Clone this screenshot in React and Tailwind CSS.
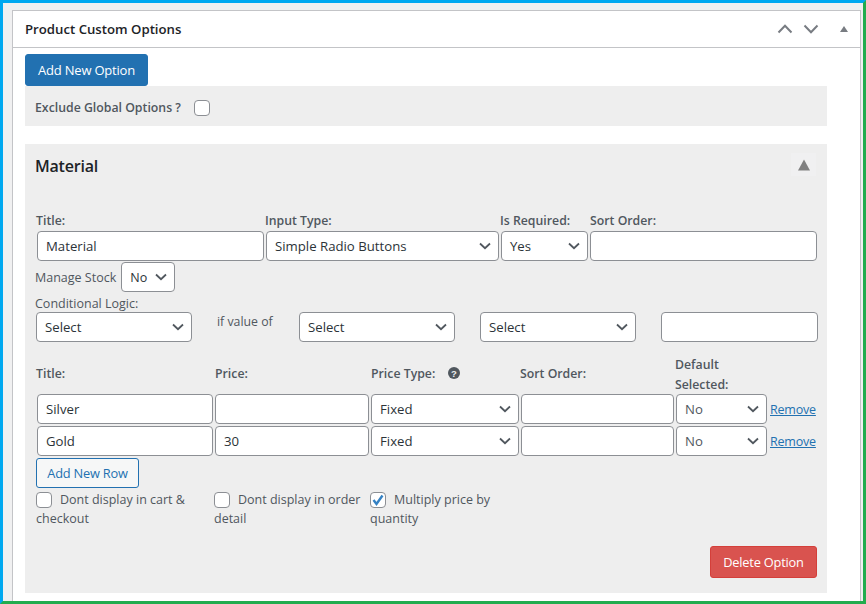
import React from "react";

const Chevron = () => (
  <svg className="absolute right-[5px] top-1/2 -translate-y-1/2 pointer-events-none" width="16" height="16" viewBox="0 0 16 16" fill="none">
    <path d="M3 5.5 L8 10.2 L13 5.5" stroke="#50575e" strokeWidth="1.8" />
  </svg>
);

const Select = ({ w, value, pl = "pl-[8px]", color = "text-[#2c3338]" }) => (
  <div className={`relative h-[30px] shrink-0 bg-white border border-[#8c8f94] rounded-[4px] flex items-center ${w} ${pl} ${color}`}>
    <span>{value}</span>
    <Chevron />
  </div>
);

const Input = ({ w, value = "", color = "text-[#2c3338]" }) => (
  <input readOnly value={value} className={`h-[30px] shrink-0 bg-white border border-[#8c8f94] rounded-[4px] px-[8px] outline-none ${w} ${color}`} />
);

const Check = ({ checked }) => (
  <span className="inline-flex align-middle items-center justify-center w-[16px] h-[16px] bg-white border border-[#8c8f94] rounded-[4px] mr-[8px] -mt-[2px]">
    {checked && (
      <svg width="14" height="14" viewBox="0 0 14 14" fill="none">
        <path d="M2.5 7 L5.5 11 L11.5 2.5" stroke="#3582c4" strokeWidth="2.4" />
      </svg>
    )}
  </span>
);

function OptionRow({ title, price }) {
  return (
    <div className="flex gap-[2px] items-center">
      <Input w="w-[176px]" value={title} />
      <Input w="w-[154px]" value={price} />
      <Select w="w-[148px]" value="Fixed" />
      <Input w="w-[153px]" />
      <Select w="w-[91px]" value="No" color="text-[#50575e]" />
      <a className="ml-[1px] text-[#2271b1] underline text-[12.5px] tracking-[-0.2px]">Remove</a>
    </div>
  );
}

export default function App() {
  return (
    <div className="w-[866px] h-[604px] overflow-hidden bg-[#f0f0f1] border-t-[3px] border-l-[3px] border-r-[3px] border-b-[3px] border-t-[#00a8f0] border-l-[#00a8f0] border-r-[#22ac4e] border-b-[#22ac4e] pt-[7px] pl-[9px] pr-[2px] text-[13.2px] text-[#3c434a] leading-[19px] font-['Open_Sans','Noto_Sans',sans-serif]">
      <div className="h-[600px] bg-white border border-[#c3c4c7] border-b-0">
        <div className="h-[37px] border-b border-[#c3c4c7] flex items-center pl-[12px] pr-[10px]">
          <h2 className="text-[13.2px] font-semibold text-[#1d2327] flex-1">Product Custom Options</h2>
          <svg width="16" height="16" viewBox="0 0 16 16" fill="none" className="mr-[10px]">
            <path d="M1.5 11.5 L8 4.8 L14.5 11.5" stroke="#787c82" strokeWidth="2" />
          </svg>
          <svg width="16" height="16" viewBox="0 0 16 16" fill="none" className="mr-[20px]">
            <path d="M1.5 4.5 L8 11.2 L14.5 4.5" stroke="#787c82" strokeWidth="2" />
          </svg>
          <svg width="10" height="8" viewBox="0 0 10 8" className="mr-[1px]">
            <path d="M5 1 L9 7 L1 7 Z" fill="#787c82" />
          </svg>
        </div>

        <div className="pl-[12px] pr-[33px] pt-[6px]">
          <button className="block w-[123px] h-[32px] bg-[#2271b1] border border-[#2271b1] rounded-[3px] text-white text-[13px] tracking-[-0.2px]">Add New Option</button>

          <div className="h-[40px] bg-[#eeeeee] flex items-center pl-[10px]">
            <span className="mt-[2px] font-semibold text-[12.3px] text-[#50575e]">Exclude Global Options ?</span>
            <span className="ml-[13px] mt-[4px] w-[16px] h-[16px] bg-white border border-[#8c8f94] rounded-[4px]" />
          </div>

          <div className="mt-[18px] h-[449px] bg-[#eeeeee] pl-[11px] pr-[9px] flex flex-col">
            <div className="h-[66px] flex items-start justify-between shrink-0">
              <h3 className="mt-[11px] ml-[-1px] text-[16px] leading-[22px] font-semibold tracking-[-0.2px] text-[#1d2327]">Material</h3>
              <div className="mt-[9px] w-[25px] h-[23px] bg-[#f0f0f1] flex items-center justify-center mr-[2px]">
                <svg width="14" height="12" viewBox="0 0 14 12">
                  <path d="M7 0.5 L13 11.5 L1 11.5 Z" fill="#808080" />
                </svg>
              </div>
            </div>

            <div className="flex text-[12.3px] font-semibold text-[#50575e] h-[21px] pt-[1px] items-start">
              <span className="w-[229px]">Title:</span>
              <span className="w-[235px]">Input Type:</span>
              <span className="w-[89px]">Is Required:</span>
              <span className="pl-[1px]">Sort Order:</span>
            </div>
            <div className="flex gap-[2px] pl-[1px]">
              <Input w="w-[227px]" value="Material" />
              <Select w="w-[233px]" value="Simple Radio Buttons" />
              <Select w="w-[87px]" value="Yes" />
              <Input w="w-[227px]" />
            </div>

            <div className="flex items-center gap-[5px] mt-[1px] ml-[-1px] text-[12.5px] text-[#50575e]">
              <span>Manage Stock</span>
              <Select w="w-[54px]" value="No" />
            </div>

            <div className="h-[20px] ml-[-1px] leading-[24px] text-[12.5px] text-[#50575e]">Conditional Logic:</div>
            <div className="flex items-start">
              <Select w="w-[156px]" value="Select" />
              <span className="w-[107px] shrink-0 pl-[25px] text-[12.3px] text-[#50575e]">if value of</span>
              <Select w="w-[156px]" value="Select" />
              <span className="w-[25px] shrink-0" />
              <Select w="w-[156px]" value="Select" />
              <span className="w-[25px] shrink-0" />
              <Input w="w-[157px]" />
            </div>

            <div className="flex h-[52px] pt-[10px] text-[12.3px] font-semibold text-[#50575e] items-center">
              <span className="w-[179px]">Title:</span>
              <span className="w-[156px]">Price:</span>
              <span className="w-[149px] flex items-center">
                Price Type:
                <svg width="12" height="12" viewBox="0 0 12 12" className="ml-[13px]">
                  <circle cx="6" cy="6" r="6" fill="#50575e" />
                  <text x="6" y="9.5" textAnchor="middle" fontSize="9.5" fontWeight="700" fill="#eeeeee" fontFamily="Liberation Sans">?</text>
                </svg>
              </span>
              <span className="w-[155px]">Sort Order:</span>
              <span className="w-[70px] leading-[20px] mt-[4px]">Default Selected:</span>
            </div>

            <div className="flex flex-col gap-[2px] pl-[1px]">
              <OptionRow title="Silver" />
              <OptionRow title="Gold" price="30" />
            </div>

            <button className="mt-[2px] w-[103px] h-[30px] shrink-0 bg-[#f6f7f7] border border-[#2271b1] rounded-[3px] text-[#2271b1] text-[12.8px] tracking-[-0.2px]">Add New Row</button>

            <div className="flex mt-[2px] text-[12.5px] text-[#50575e]">
              <div className="w-[178px] pr-[20px]"><Check />Dont display in cart &amp; checkout</div>
              <div className="w-[156px]"><Check />Dont display in order detail</div>
              <div className="w-[135px]"><Check checked />Multiply price by quantity</div>
            </div>

            <div className="flex justify-end mt-[18px] mr-[1px]">
              <button className="w-[107px] h-[32px] bg-[#d9534f] border border-[#d43f3a] rounded-[3px] text-white text-[12.8px] tracking-[-0.2px]">Delete Option</button>
            </div>
          </div>
        </div>
      </div>
    </div>
  );
}
